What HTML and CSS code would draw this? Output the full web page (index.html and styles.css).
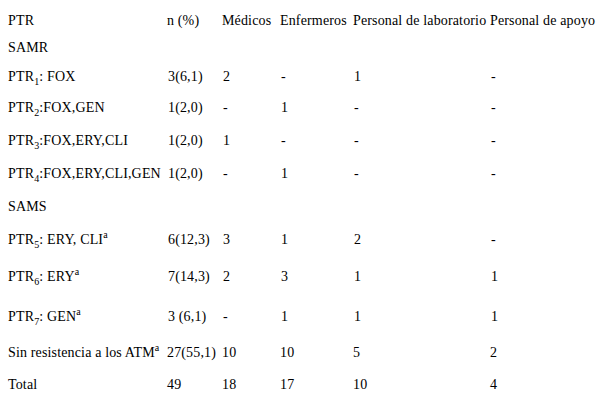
FILE: index.html
```html
<!DOCTYPE html>
<html>
<head>
<meta charset="utf-8">
<link rel="stylesheet" href="styles.css">
</head>
<body>
<table class="tbl">
  <colgroup>
    <col class="c1"><col class="c2"><col class="c3"><col class="c4"><col class="c5"><col class="c6">
  </colgroup>
  <tr class="h25"><td>PTR</td><td>n (%)</td><td>Médicos</td><td>Enfermeros</td><td>Personal de laboratorio</td><td>Personal de apoyo</td></tr>
  <tr class="h28"><td>SAMR</td><td></td><td></td><td></td><td></td><td></td></tr>
  <tr class="h30"><td>PTR<sub>1</sub>: FOX</td><td class="v">3(6,1)</td><td class="v">2</td><td class="v">-</td><td class="v">1</td><td class="v">-</td></tr>
  <tr class="h33"><td>PTR<sub>2</sub>:FOX,GEN</td><td class="v">1(2,0)</td><td class="v">-</td><td class="v">1</td><td class="v">-</td><td class="v">-</td></tr>
  <tr class="h33"><td>PTR<sub>3</sub>:FOX,ERY,CLI</td><td class="v">1(2,0)</td><td class="v">1</td><td class="v">-</td><td class="v">-</td><td class="v">-</td></tr>
  <tr class="h33"><td>PTR<sub>4</sub>:FOX,ERY,CLI,GEN</td><td class="v">1(2,0)</td><td class="v">-</td><td class="v">1</td><td class="v">-</td><td class="v">-</td></tr>
  <tr class="h32"><td>SAMS</td><td></td><td></td><td></td><td></td><td></td></tr>
  <tr class="h34"><td>PTR<sub>5</sub>: ERY, CLI<sup>a</sup></td><td class="v">6(12,3)</td><td class="v">3</td><td class="v">1</td><td class="v">2</td><td class="v">-</td></tr>
  <tr class="h40"><td>PTR<sub>6</sub>: ERY<sup>a</sup></td><td class="v">7(14,3)</td><td class="v">2</td><td class="v">3</td><td class="v">1</td><td class="v">1</td></tr>
  <tr class="h40"><td>PTR<sub>7</sub>: GEN<sup>a</sup></td><td class="v">3 (6,1)</td><td class="v">-</td><td class="v">1</td><td class="v">1</td><td class="v">1</td></tr>
  <tr class="h33"><td>Sin resistencia a los ATM<sup>a</sup></td><td>27(55,1)</td><td>10</td><td>10</td><td>5</td><td>2</td></tr>
  <tr class="h30"><td>Total</td><td>49</td><td>18</td><td>17</td><td>10</td><td>4</td></tr>
</table>
</body>
</html>
```

FILE: styles.css
```css
html, body {
  margin: 0;
  padding: 0;
  background: #fff;
}
body {
  padding: 8px 0 0 8px;
  font-family: "Liberation Serif", "Times New Roman", serif;
  font-size: 14px;
  color: #000;
}
.tbl {
  border-collapse: collapse;
  table-layout: fixed;
  width: 594px;
}
.tbl td {
  padding: 0;
  vertical-align: middle;
  white-space: nowrap;
  line-height: 15px;
  letter-spacing: 0.15px;
}
.tbl td.v {
  padding-left: 1px;
}
.c1 { width: 159px; }
.c2 { width: 55px; }
.c3 { width: 58px; }
.c4 { width: 73px; }
.c5 { width: 137px; }
.c6 { width: 112px; }
.tbl sub, .tbl sup {
  font-size: 10px;
  line-height: 0;
}
.h25 { height: 25px; }
.h28 { height: 28px; }
.h30 { height: 30px; }
.h32 { height: 32px; }
.h33 { height: 33px; }
.h34 { height: 34px; }
.h40 { height: 40px; }
```
